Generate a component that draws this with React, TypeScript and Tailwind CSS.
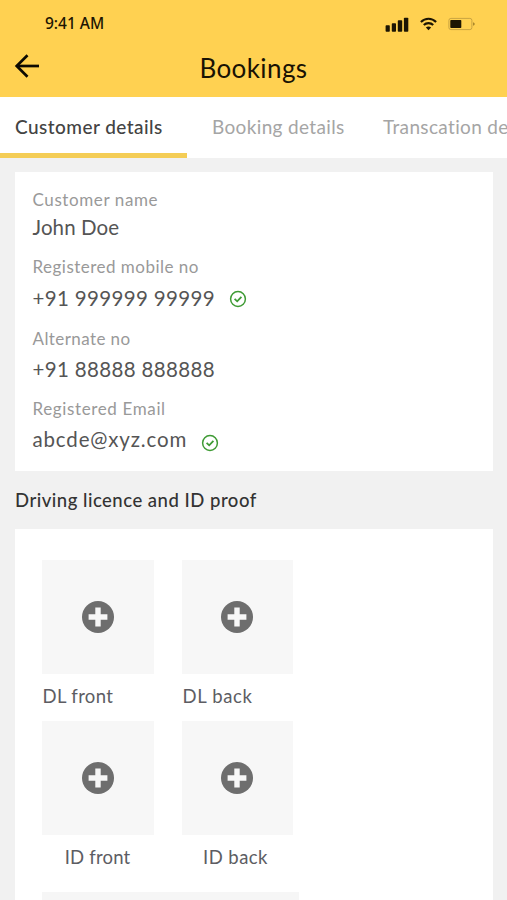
import clsx from 'clsx';

const details = [
  { label: 'Customer name', value: 'John Doe', labelClass: 'tracking-[0.6px]', valueClass: 'h-[31px] tracking-[0.1px]' },
  { label: 'Registered mobile no', value: '+91 999999 99999', labelClass: 'mt-[12px] tracking-[0.48px]', valueClass: 'h-[39px] tracking-[0.35px]', check: 'ml-[14px] mt-px' },
  { label: 'Alternate no', value: '+91 88888 888888', labelClass: 'mt-[9px] tracking-[0.42px]', valueClass: 'h-[37px] tracking-[0.35px]' },
  { label: 'Registered Email', value: 'abcde@xyz.com', labelClass: 'mt-[9px] tracking-[0.63px]', valueClass: 'h-[37px] tracking-[0.84px]', check: 'ml-[14px] mt-[6px]' },
];

const uploads = [
  { name: 'DL front', align: 'justify-start pl-px tracking-[0.35px]', icon: '-mt-px' },
  { name: 'DL back', align: 'justify-start pl-px tracking-[0.65px]', icon: '-mt-px' },
  { name: 'ID front', align: 'justify-center tracking-[0.2px]', icon: '' },
  { name: 'ID back', align: 'justify-center pr-[3px] tracking-[0.45px]', icon: '' },
];

function StatusIcons() {
  return (
    <div className="flex items-center">
      <svg width="24" height="15" viewBox="0 0 24 15" fill="#1c1503">
        <rect x="0.6" y="8.3" width="4.2" height="6.4" rx="0.8" />
        <rect x="6.8" y="6.2" width="4.2" height="8.5" rx="0.8" />
        <rect x="12.8" y="3.2" width="4.4" height="11.5" rx="0.8" />
        <rect x="18.9" y="0.8" width="4.4" height="13.9" rx="0.8" />
      </svg>
      <svg className="ml-[11px]" width="17" height="14" viewBox="0 0 17 14" fill="none" stroke="#1c1503" strokeWidth="2.1">
        <path d="M0.9 5.1C5.2 0.6 11.8 0.6 16.1 5.1" />
        <path d="M3.8 8.1C6.4 5.4 10.6 5.4 13.2 8.1" />
        <path d="M8.5 13.2L5.9 10.5C7.3 9.1 9.7 9.1 11.1 10.5Z" fill="#1c1503" stroke="none" />
      </svg>
      <svg className="ml-[11px]" width="28" height="14" viewBox="0 0 28 14">
        <rect x="0.9" y="1.4" width="23" height="11.2" rx="2" fill="none" stroke="#c39e3f" strokeWidth="0.9" />
        <rect x="2.3" y="3" width="11" height="8" rx="0.8" fill="#1c1503" />
        <path d="M25.3 5.2C27 5.8 27 8.2 25.3 8.8Z" fill="#85671b" />
      </svg>
    </div>
  );
}

function Verified({ className }: { className: string }) {
  return (
    <svg className={className} width="18" height="18" viewBox="0 0 18 18" fill="none" stroke="#3f9b35" strokeWidth="1.5">
      <circle cx="9" cy="9" r="7.4" />
      <path d="M5.6 8.8L8.2 11.3L12.4 6.9" strokeWidth="1.8" />
    </svg>
  );
}

function PlusIcon({ className }: { className: string }) {
  return (
    <svg className={className} width="32" height="32" viewBox="0 0 32 32">
      <circle cx="16" cy="16" r="16" fill="#6e6e6e" />
      <path d="M13.3 6.6H18.7V13.3H25.4V18.7H18.7V25.4H13.3V18.7H6.6V13.3H13.3Z" fill="#f7f7f7" />
    </svg>
  );
}

export default function App() {
  return (
    <div className="flex h-[900px] w-[507px] flex-col overflow-hidden whitespace-nowrap bg-[#f1f1f1] font-[Lato,sans-serif]">
      <header className="h-[97px] shrink-0 bg-[#ffd151]">
        <div className="flex h-12 items-center justify-between pl-[45px] pr-[31px]">
          <span className="font-['Noto_Sans',sans-serif] text-[15.5px] font-medium text-[#1c1503]">9:41 AM</span>
          <StatusIcons />
        </div>
        <div className="grid grid-cols-3 items-center pt-[2px]">
          <svg className="-mt-[5px] ml-[14px]" width="26" height="26" viewBox="0 0 26 26" fill="none" stroke="#0d0a02" strokeWidth="2.7">
            <path d="M25 13H3" />
            <path d="M13.5 2.2L2.7 13L13.5 23.8" />
          </svg>
          <h1 className="text-center text-[26px] leading-9 tracking-[0.4px] text-[#181203]">Bookings</h1>
        </div>
      </header>

      <nav className="flex h-[61px] shrink-0 bg-white text-[19px] leading-[60px] text-[#a5a5a5]">
        <div className="h-[61px] w-[187px] shrink-0 border-b-[5px] border-[#f4cd56] pl-[15px] font-medium tracking-[0.45px] text-[#434343]">Customer details</div>
        <div className="w-[172px] shrink-0 pl-[25px] tracking-[0.35px]">Booking details</div>
        <div className="shrink-0 pl-6 tracking-[0.35px]">Transcation details</div>
      </nav>

      <section className="mx-auto mt-[14px] h-[299px] w-[478px] shrink-0 bg-white pl-[18px] pt-4">
        {details.map((d) => (
          <div key={d.label}>
            <div className={clsx('h-6 text-[17px] leading-6 text-[#999]', d.labelClass)}>{d.label}</div>
            <div className={clsx('flex items-center text-[20.5px] text-[#555]', d.valueClass)}>
              <span>{d.value}</span>
              {d.check && <Verified className={d.check} />}
            </div>
          </div>
        ))}
      </section>

      <h2 className="h-[58px] shrink-0 pl-[15px] text-[18.5px] font-medium leading-[58px] tracking-[0.5px] text-[#333]">
        Driving licence and ID proof
      </h2>

      <section className="mx-auto h-[500px] w-[478px] shrink-0 bg-white pl-[27px] pt-[31px]">
        <div className="grid w-[251px] grid-cols-[112px_111px] gap-x-7">
          {uploads.map((u) => (
            <div key={u.name} className="h-[161px]">
              <button className="flex h-[114px] w-full items-center justify-center bg-[#f7f7f7]">
                <PlusIcon className={u.icon} />
              </button>
              <div className={clsx('flex h-[46px] items-center text-[18.5px] text-[#5d5d63]', u.align)}>{u.name}</div>
            </div>
          ))}
        </div>
        <div className="mt-[10px] h-20 w-[257px] bg-[#f6f6f6]" />
      </section>
    </div>
  );
}
